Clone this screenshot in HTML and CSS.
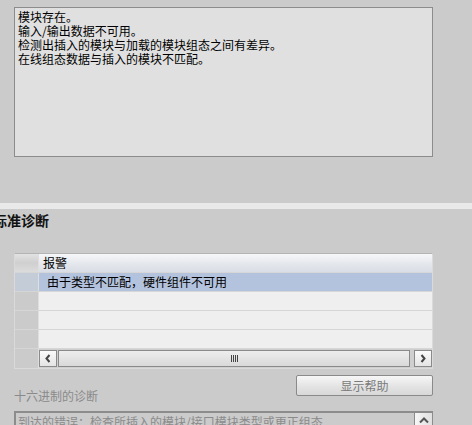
FILE: index.html
```html
<!DOCTYPE html>
<html lang="zh-CN">
<head>
  <meta charset="UTF-8" />
  <title>诊断</title>
  <link rel="stylesheet" href="styles.css">
</head>
<body>

  <!-- 状态信息 -->
  <div class="msg-box">
    <div>模块存在。</div>
    <div>输入/输出数据不可用。</div>
    <div>检测出插入的模块与加载的模块组态之间有差异。</div>
    <div>在线组态数据与插入的模块不匹配。</div>
  </div>

  <div class="band"></div>

  <h2 class="title">标准诊断</h2>

  <!-- 报警表格 -->
  <div class="grid">
    <div class="row head">
      <div class="rh"></div>
      <div class="cell">报警</div>
    </div>
    <div class="row sel">
      <div class="rh"></div>
      <div class="cell">由于类型不匹配，硬件组件不可用</div>
    </div>
    <div class="row"><div class="rh"></div><div class="cell"></div></div>
    <div class="row"><div class="rh"></div><div class="cell"></div></div>
    <div class="row"><div class="rh"></div><div class="cell"></div></div>
    <div class="row scroll">
      <div class="rh"></div>
      <div class="hbar">
        <div class="sbtn">
          <svg width="8" height="9" viewBox="0 0 8 9"><path d="M5.5 1 L2.5 4.5 L5.5 8" fill="none" stroke="#444" stroke-width="2"/></svg>
        </div>
        <div class="thumb"><span class="grip"></span></div>
        <div class="track"></div>
        <div class="sbtn">
          <svg width="8" height="9" viewBox="0 0 8 9"><path d="M2.5 1 L5.5 4.5 L2.5 8" fill="none" stroke="#444" stroke-width="2"/></svg>
        </div>
      </div>
    </div>
  </div>

  <div class="actions">
    <span class="label">十六进制的诊断</span>
    <button class="btn" disabled>显示帮助</button>
  </div>

  <div class="hint">
    <span class="hint-text">到达的错误：检查所插入的模块/接口模块类型或更正组态</span>
    <div class="upbtn">
      <svg width="10" height="7" viewBox="0 0 10 7"><path d="M1 5.5 L5 1.5 L9 5.5" fill="none" stroke="#555" stroke-width="2"/></svg>
    </div>
  </div>

</body>
</html>
```

FILE: styles.css
```css
html, body {
  margin: 0;
  padding: 0;
}

body {
  width: 472px;
  height: 425px;
  overflow: hidden;
  background: #cbcbcb;
  font-family: "Noto Sans CJK SC", "DejaVu Sans", sans-serif;
  font-size: 12px;
  color: #000;
}

.msg-box {
  box-sizing: border-box;
  width: 419px;
  height: 150px;
  margin: 7px 0 0 14px;
  padding: 2px 3px;
  border: 1px solid #8c8c8c;
  background: #e0e0e0;
  line-height: 14px;
}

.band {
  height: 6px;
  margin-top: 46px;
  background: #e9e9e9;
}

.title {
  margin: 1px 0 0 -7px;
  font-size: 14px;
  line-height: 20px;
  font-weight: bold;
  color: #111;
}

.grid {
  box-sizing: border-box;
  width: 419px;
  margin: 23px 0 0 14px;
  border-top: 1px solid #b4b4b4;
  border-left: 1px solid #dadada;
  border-right: 1px solid #dadada;
  border-bottom: 1px solid #dadada;
}

.row {
  box-sizing: border-box;
  display: flex;
  height: 19px;
  border-bottom: 1px solid #d6d6d6;
  background: #efefef;
}

.rh {
  width: 23px;
  flex: none;
  background: #cbcbcb;
  border-right: 1px solid #dedede;
}

.cell {
  flex: 1;
  padding-left: 4px;
  line-height: 18px;
}

.head {
  background: linear-gradient(#f6f7f9, #e4e7ec 55%, #d9dde5);
}

.head .rh {
  background: linear-gradient(#e2e2e2, #cfcfcf 50%, #dcdcdc);
}

.sel {
  background: #b4c3dd;
}

.sel .rh {
  background: #c4ccd7;
}

.sel .cell {
  padding-left: 8px;
}

.scroll {
  height: 19px;
  border-bottom: none;
  background: #cbcbcb;
}

.hbar {
  flex: 1;
  display: flex;
  align-items: stretch;
  padding: 1px 0;
  background: #cfcfcf;
}

.sbtn {
  box-sizing: border-box;
  width: 18px;
  display: flex;
  align-items: center;
  justify-content: center;
  border: 1px solid #8a8a8a;
  background: linear-gradient(#fbfbfb, #e4e4e4);
}

.thumb {
  box-sizing: border-box;
  width: 352px;
  margin-left: 1px;
  display: flex;
  align-items: center;
  justify-content: center;
  border: 1px solid #8a8a8a;
  background: linear-gradient(#eeeeee, #d9d9d9);
}

.grip {
  width: 7px;
  height: 7px;
  background: repeating-linear-gradient(90deg, #444 0 1px, transparent 1px 2px);
}

.track {
  flex: 1;
}

.actions {
  display: flex;
  justify-content: space-between;
  align-items: flex-end;
  width: 419px;
  margin: 6px 0 0 14px;
}

.label {
  color: #8a8a8a;
  line-height: 14px;
  margin-bottom: -7px;
}

.btn {
  box-sizing: border-box;
  width: 137px;
  height: 21px;
  padding: 0;
  border: 1px solid #8a8a8a;
  border-radius: 2px;
  background: linear-gradient(#f7f7f7, #e2e2e2 60%, #d8d8d8);
  font-family: inherit;
  font-size: 12px;
  color: #7a7a7a;
}

.hint {
  box-sizing: border-box;
  display: flex;
  justify-content: space-between;
  width: 419px;
  height: 30px;
  margin: 15px 0 0 14px;
  border: 2px solid #8c8c8c;
  border-right-width: 1px;
  line-height: 14px;
}

.hint-text {
  padding: 2px 0 0 2px;
  color: #8a8a8a;
}

.upbtn {
  box-sizing: border-box;
  width: 18px;
  display: flex;
  justify-content: center;
  padding-top: 4px;
  border-left: 1px solid #8a8a8a;
  background: linear-gradient(90deg, #f6f6f6, #e0e0e0);
}
```
